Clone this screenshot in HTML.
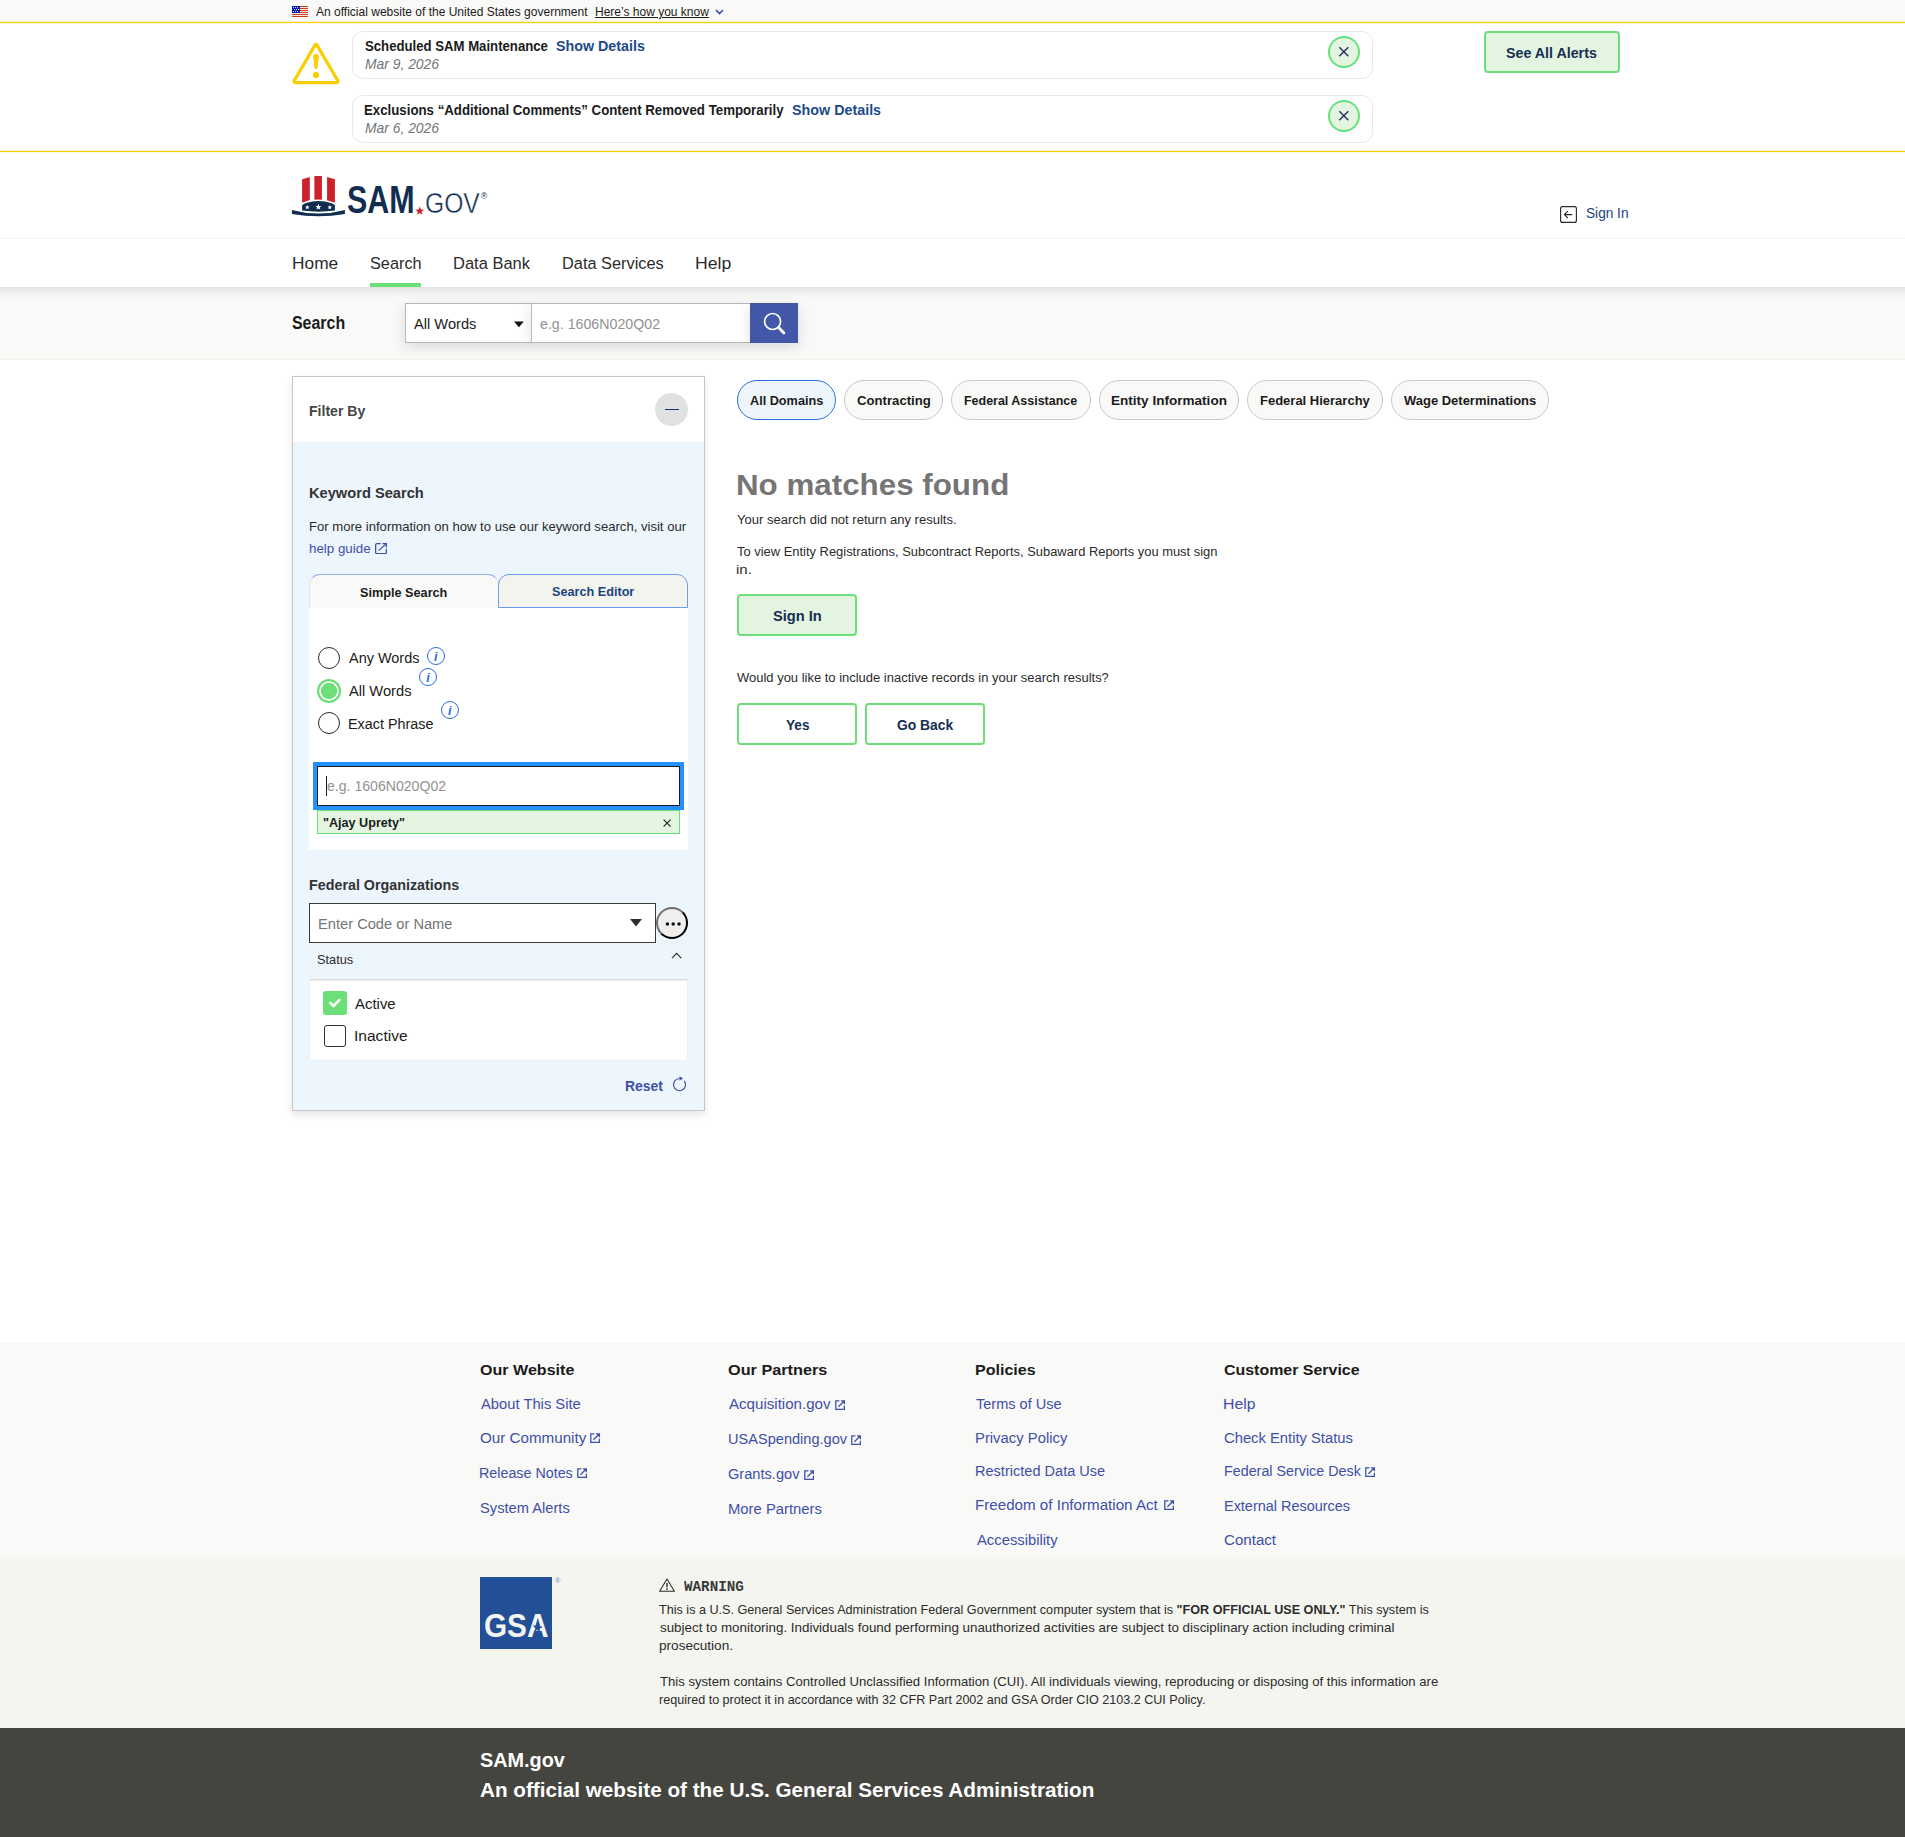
<!DOCTYPE html>
<html lang="en">
<head>
<meta charset="utf-8">
<title>SAM.gov | Search</title>
<style>
html,body{margin:0;padding:0;background:#fff;}
body{font-family:"Liberation Sans",sans-serif;color:#1b1b1b;}
#page{position:relative;width:1905px;height:1837px;overflow:hidden;background:#fff;}
#page div,#page svg{position:absolute;box-sizing:border-box;}
.t{position:absolute;white-space:nowrap;line-height:1;transform-origin:0 0;}
.t b{font-weight:700;}
/* bands */
.govbanner{left:0;top:0;width:1905px;height:22px;background:#f9f9f7;}
.yline{left:0;width:1905px;height:3px;background:linear-gradient(rgba(251,207,8,.18) 0 1px,#fbcf08 1px 2px,rgba(251,207,8,.14) 2px 3px);}
.hline{left:0;top:238px;width:1905px;height:1px;background:#f3f3f0;}
.navshadow{left:0;top:287px;width:1905px;height:12px;background:linear-gradient(#e2e1e0,#eeeeec 40%,#f9f9f7);}
.searchband{left:0;top:287px;width:1905px;height:73px;background:#f9f9f7;border-bottom:1px solid #f1f1ee;}
.navul{left:370px;top:283px;width:51px;height:4px;background:#6ddf79;}
/* alerts */
.acard{left:352px;width:1021px;height:48px;border:1px solid #e8e8e8;border-radius:11px;background:#fff;}
.aclose{left:1328px;width:32px;height:32px;border:2px solid #6ddf79;border-radius:50%;background:#e3f5e1;}
.gbtn{border:2px solid #6ddf79;border-radius:4px;background:#e3f5e1;}
.wbtn{border:2px solid #6ddf79;border-radius:4px;background:#fff;}
/* search controls */
.sbox{top:303px;height:40px;background:#fff;border:1px solid #b9b9b9;box-shadow:0 4px 14px rgba(0,0,0,.13);}
.sbtn{left:750px;top:303px;width:48px;height:40px;background:#4157a8;box-shadow:0 4px 14px rgba(0,0,0,.13);}
/* filter panel */
.panel{left:292px;top:376px;width:413px;height:735px;border:1px solid #c5c5c5;background:#edf5fd;box-shadow:0 4px 8px rgba(0,0,0,.10);}
.phead{left:293px;top:377px;width:411px;height:65px;background:#fff;}
.pcirc{left:655px;top:393px;width:33px;height:33px;border-radius:50%;background:#e1e1e1;}
.tab1{left:309px;top:574px;width:190px;height:34px;border:1px solid rgba(141,180,238,.25);border-top-color:#8db4ee;border-bottom:none;border-radius:11px 11px 0 0;background:#f9f9f7;}
.tab2{left:498px;top:574px;width:190px;height:34px;border:1px solid #6d9df0;border-radius:11px 11px 0 0;background:#f4f4ee;}
.wbox{left:309px;width:379px;background:#fff;}
.radio{left:318px;width:22px;height:22px;border:1.5px solid #2b2b2b;border-radius:50%;background:#fff;}
.radio.on{border:2.1px solid #6ddf79;box-shadow:inset 0 0 0 1.8px #fff;background:#6ddf79;left:317px;width:24px;height:24px;}
.info{width:18.4px;height:18.4px;border:1.4px solid #2a6fdc;border-radius:50%;}
.kwin{left:317px;top:766px;width:363px;height:40px;border:1px solid #1b1b1b;background:#fff;outline:4px solid #2491ff;}
.chip{left:317px;top:810px;width:363px;height:24px;border:1px solid #6ddf79;background:#e3f5e1;}
.fin{left:309px;top:903px;width:347px;height:40px;border:1px solid #3a3a36;background:#fff;}
.dots{left:656px;top:907px;width:32px;height:32px;border:2px solid #000;border-color:#6e6e6e #000 #000 #6e6e6e;border-radius:50%;background:#efefef;}
.cbon{left:323px;top:991px;width:24px;height:24px;border-radius:3px;background:#6ddf79;}
.cboff{left:324px;top:1025px;width:22px;height:22px;border:1.5px solid #303030;border-radius:3px;background:#fff;}
/* pills */
.pill{top:380px;height:40px;border:1px solid #c9c9c9;border-radius:20px;background:#f9f9f7;}
.pill.on{border:1.5px solid #2a6fdc;background:#eff6fb;}
/* footer */
.foot1{left:0;top:1343px;width:1905px;height:214px;background:#f9f9f7;}
.foot2{left:0;top:1557px;width:1905px;height:171px;background:#f4f5ef;}
.foot3{left:0;top:1728px;width:1905px;height:109px;background:#454540;}
.gsa{left:480px;top:1577px;width:72px;height:72px;background:#234f96;}

</style>
</head>
<body>
<div id="page">
<!-- top gov banner -->
<div class="govbanner"></div>
<svg style="left:292px;top:6px;width:16px;height:11px" viewBox="0 0 16 11">
  <rect width="16" height="11" fill="#fff"/>
  <g fill="#d9391a"><rect y="0" width="16" height="1.1"/><rect y="2" width="16" height="1.1"/><rect y="4" width="16" height="1.1"/><rect y="6" width="16" height="1.1"/><rect y="8" width="16" height="1.1"/><rect y="10" width="16" height="1"/></g>
  <rect width="8" height="7" fill="#0a1aa6"/>
  <g fill="#fff"><circle cx="1.5" cy="1.5" r=".55"/><circle cx="3.5" cy="1.5" r=".55"/><circle cx="5.5" cy="1.5" r=".55"/><circle cx="2.5" cy="3.5" r=".55"/><circle cx="4.5" cy="3.5" r=".55"/><circle cx="6.5" cy="3.5" r=".55"/><circle cx="1.5" cy="5.5" r=".55"/><circle cx="3.5" cy="5.5" r=".55"/><circle cx="5.5" cy="5.5" r=".55"/></g>
</svg>
<svg style="left:715px;top:9px;width:9px;height:6px" viewBox="0 0 9 6"><path d="M1 1 L4.5 4.5 L8 1" fill="none" stroke="#3a4fb0" stroke-width="1.7"/></svg>
<div class="yline" style="top:21px"></div>
<div class="yline" style="top:150px"></div>

<!-- alerts -->
<svg style="left:290px;top:40px;width:52px;height:46px" viewBox="290 40 52 46">
  <path d="M314.7 45.6 Q316 43.3 317.3 45.6 L337.6 80.4 Q338.9 82.6 336.3 82.6 L295.7 82.6 Q293.1 82.6 294.4 80.4 Z" fill="none" stroke="#facd04" stroke-width="3.2" stroke-linejoin="round"/>
  <path d="M313.2 56.6 Q313.1 54 316 54 Q318.9 54 318.8 56.6 L317.6 67.6 Q317.4 69.1 316 69.1 Q314.6 69.1 314.4 67.6 Z" fill="#facd04"/>
  <circle cx="316" cy="75" r="3.1" fill="#facd04"/>
</svg>
<div class="acard" style="top:31px"></div>
<div class="acard" style="top:95px"></div>
<div class="aclose" style="top:36px"></div>
<div class="aclose" style="top:100px"></div>
<svg style="left:1338px;top:46px;width:12px;height:12px" viewBox="0 0 12 12"><path d="M1.3 1.3 L10.3 10.3 M10.3 1.3 L1.3 10.3" stroke="#162e51" stroke-width="1.3"/></svg>
<svg style="left:1338px;top:110px;width:12px;height:12px" viewBox="0 0 12 12"><path d="M1.3 1.3 L10.3 10.3 M10.3 1.3 L1.3 10.3" stroke="#162e51" stroke-width="1.3"/></svg>
<div class="gbtn" style="left:1484px;top:31px;width:136px;height:42px"></div>

<!-- header logo -->
<svg style="left:290px;top:174px;width:60px;height:44px" viewBox="290 174 60 44">
  <path d="M302.1 179.2 L309.8 177 L309.8 199.9 L302.1 202.7 Z" fill="#cd2029"/>
  <path d="M314.4 176 L321.9 176 L321.9 199.8 Q318.2 199.3 314.4 199.8 Z" fill="#cd2029"/>
  <path d="M327.1 177 L334.9 179.2 L334.9 202.7 L327.1 200.3 Z" fill="#cd2029"/>
  <path d="M302.1 205.6 Q302.6 204.4 306 203 Q318.5 199.2 331 203 Q334.4 204.4 334.9 205.6 L334.9 210.6 Q318.5 212.8 302.1 210.6 Z" fill="#112e51"/>
  <path d="M291.9 209.9 Q318.4 217.2 344.9 209.9 L344.9 214 Q318.4 218.4 291.9 214 Z" fill="#112e51"/>
  <g fill="#fff">
    <path d="M307.3 205 l.62 1.5 1.62.12-1.24 1.05.4 1.58-1.4-.87-1.4.87.4-1.58-1.24-1.05 1.62-.12z"/>
    <path d="M318.4 204 l.8 1.95 2.1.15-1.6 1.36.5 2.04-1.8-1.12-1.8 1.12.5-2.04-1.6-1.36 2.1-.15z"/>
    <path d="M329.8 205 l.62 1.5 1.62.12-1.24 1.05.4 1.58-1.4-.87-1.4.87.4-1.58-1.24-1.05 1.62-.12z"/>
  </g>
</svg>
<svg style="left:414px;top:205px;width:12px;height:12px" viewBox="414 205 12 12"><path d="M419.75 206.5 l1.1 3.1 3.3.1-2.6 2 .95 3.15-2.75-1.85-2.75 1.85.95-3.15-2.6-2 3.3-.1z" fill="#cd2029"/></svg>

<!-- sign in icon -->
<svg style="left:1559px;top:205px;width:19px;height:19px" viewBox="0 0 19 19">
  <rect x="1.6" y="1.6" width="15.8" height="15.8" rx="2" fill="none" stroke="#2b2b2b" stroke-width="1.15"/>
  <path d="M13.2 9.6 L5.6 9.6 M8.8 6.2 L5.4 9.6 L8.8 13" fill="none" stroke="#2b2b2b" stroke-width="1.1"/>
</svg>

<!-- nav -->
<div class="hline"></div>
<div class="searchband"></div>
<div class="navshadow"></div>
<div class="navul"></div>

<!-- search controls -->
<div class="sbox" style="left:405px;width:127px"></div>
<div class="sbox" style="left:531px;width:220px"></div>
<div class="sbtn"></div>
<svg style="left:514px;top:321px;width:10px;height:7px" viewBox="0 0 10 7"><path d="M0 .4 L9.8 .4 L4.9 6.2 Z" fill="#111"/></svg>
<svg style="left:760px;top:310px;width:28px;height:28px" viewBox="760 310 28 28">
  <circle cx="772.6" cy="321.5" r="8" fill="none" stroke="#fff" stroke-width="1.7"/>
  <path d="M778.6 327.6 L783.9 332.9" stroke="#fff" stroke-width="2.8" stroke-linecap="round"/>
</svg>

<!-- filter panel -->
<div class="panel"></div>
<div class="phead"></div>
<div class="pcirc"></div>
<div style="left:665px;top:409px;width:14px;height:1.3px;background:#12306a"></div>
<svg style="left:375px;top:542.9px;width:12px;height:11.4px" viewBox="0 0 12 11.4"><path d="M5.6 .65 H1.9 Q.65 .65 .65 1.9 V9.5 Q.65 10.75 1.9 10.75 H10.1 Q11.35 10.75 11.35 9.5 V5.8 M7.4 .65 H11.35 V4.4 M11.1 .9 L3.6 7.6" fill="none" stroke="#3f4fa8" stroke-width="1.25"/></svg>
<div class="wbox" style="top:607px;height:243px"></div>
<div class="tab1"></div>
<div class="tab2"></div>
<div class="radio" style="top:647px"></div>
<div class="radio on" style="top:679px"></div>
<div class="radio" style="top:712px"></div>
<div class="info" style="left:427px;top:647px"></div>
<div class="info" style="left:419.1px;top:668.1px"></div>
<div class="info" style="left:441.1px;top:701.1px"></div>
<div class="kwin"></div>
<div style="left:326px;top:776px;width:1px;height:20px;background:#1b1b1b"></div>
<div class="chip"></div>
<svg style="left:662px;top:818px;width:10px;height:10px" viewBox="0 0 10 10"><path d="M1.6 1.6 L8.6 8.6 M8.6 1.6 L1.6 8.6" stroke="#1b1b1b" stroke-width="1.1"/></svg>
<div class="fin"></div>
<svg style="left:629px;top:918px;width:14px;height:10px" viewBox="629 918 14 10"><path d="M630 919 L642 919 L636 926.6 Z" fill="#2e2e2a"/></svg>
<div class="dots"></div>
<svg style="left:665px;top:921px;width:16px;height:6px" viewBox="0 0 16 6"><circle cx="2.45" cy="3.1" r="1.75" fill="#111"/><circle cx="8.2" cy="3.1" r="1.75" fill="#111"/><circle cx="14" cy="3.1" r="1.75" fill="#111"/></svg>
<svg style="left:670px;top:950px;width:14px;height:10px" viewBox="670 950 14 10"><path d="M672 958.1 L676.6 953.3 L681.2 958.1" fill="none" stroke="#333" stroke-width="1.25"/></svg>
<div class="wbox" style="top:979px;height:81px;border:1px solid #efefef;border-top-color:#d9d9d9;border-bottom-color:#f7f9fb;box-shadow:inset 0 1px 2px rgba(0,0,0,.07)"></div>
<div class="cbon"></div>
<svg style="left:326px;top:995px;width:18px;height:16px" viewBox="326 995 18 16"><path d="M329.7 1002.2 L333.5 1006 L340.2 999.1" fill="none" stroke="#fff" stroke-width="2.6"/></svg>
<div class="cboff"></div>
<svg style="left:671px;top:1074px;width:18px;height:19px" viewBox="671 1074 18 19"><path d="M679.5 1078.5 A6.1 6.1 0 1 0 684.3 1080.8" fill="none" stroke="#4150a5" stroke-width="1.15"/><path d="M679.5 1076.3 L683 1078.5 L679.5 1080.7 Z" fill="#4150a5"/></svg>

<!-- pills -->
<div class="pill on" style="left:737px;width:99px"></div>
<div class="pill" style="left:844px;width:99px"></div>
<div class="pill" style="left:951px;width:140px"></div>
<div class="pill" style="left:1099px;width:140px"></div>
<div class="pill" style="left:1247px;width:136px"></div>
<div class="pill" style="left:1391px;width:158px"></div>

<!-- main buttons -->
<div class="gbtn" style="left:737px;top:594px;width:120px;height:42px"></div>
<div class="wbtn" style="left:737px;top:703px;width:120px;height:42px"></div>
<div class="wbtn" style="left:865px;top:703px;width:120px;height:42px"></div>

<!-- footer -->
<div class="foot1"></div>
<div class="foot2"></div>
<div class="foot3"></div>
<div class="gsa"></div>
<svg style="left:658px;top:1577px;width:18px;height:16px" viewBox="0 0 18 16"><path d="M9 1.9 L16.4 14.2 L1.6 14.2 Z" fill="none" stroke="#2b2b2b" stroke-width="1.05" stroke-linejoin="round"/><path d="M9 6 V10.2" stroke="#2b2b2b" stroke-width="1.4"/><circle cx="9" cy="12.1" r=".9" fill="#2b2b2b"/></svg>

<!-- external link icons -->
<svg style="left:590.4px;top:1432.5px;width:10.2px;height:10.2px" viewBox="0 0 10.2 10.2"><path d="M4.4 .8 H.8 V9.4 H9.4 V5.8 M6 .8 H9.4 V4.2 M9.2 1 L3.4 6.8" fill="none" stroke="#3f4fa8" stroke-width="1.3"/></svg>
<svg style="left:577.0px;top:1467.6px;width:10.2px;height:10.2px" viewBox="0 0 10.2 10.2"><path d="M4.4 .8 H.8 V9.4 H9.4 V5.8 M6 .8 H9.4 V4.2 M9.2 1 L3.4 6.8" fill="none" stroke="#3f4fa8" stroke-width="1.3"/></svg>
<svg style="left:834.7px;top:1399.7px;width:10.2px;height:10.2px" viewBox="0 0 10.2 10.2"><path d="M4.4 .8 H.8 V9.4 H9.4 V5.8 M6 .8 H9.4 V4.2 M9.2 1 L3.4 6.8" fill="none" stroke="#3f4fa8" stroke-width="1.3"/></svg>
<svg style="left:850.9px;top:1435.0px;width:10.2px;height:10.2px" viewBox="0 0 10.2 10.2"><path d="M4.4 .8 H.8 V9.4 H9.4 V5.8 M6 .8 H9.4 V4.2 M9.2 1 L3.4 6.8" fill="none" stroke="#3f4fa8" stroke-width="1.3"/></svg>
<svg style="left:803.7px;top:1470.0px;width:10.2px;height:10.2px" viewBox="0 0 10.2 10.2"><path d="M4.4 .8 H.8 V9.4 H9.4 V5.8 M6 .8 H9.4 V4.2 M9.2 1 L3.4 6.8" fill="none" stroke="#3f4fa8" stroke-width="1.3"/></svg>
<svg style="left:1163.5px;top:1500.4px;width:10.2px;height:10.2px" viewBox="0 0 10.2 10.2"><path d="M4.4 .8 H.8 V9.4 H9.4 V5.8 M6 .8 H9.4 V4.2 M9.2 1 L3.4 6.8" fill="none" stroke="#3f4fa8" stroke-width="1.3"/></svg>
<svg style="left:1365.2px;top:1466.6px;width:10.2px;height:10.2px" viewBox="0 0 10.2 10.2"><path d="M4.4 .8 H.8 V9.4 H9.4 V5.8 M6 .8 H9.4 V4.2 M9.2 1 L3.4 6.8" fill="none" stroke="#3f4fa8" stroke-width="1.3"/></svg>
<!-- text -->
<span class="t" id="t0" style="left:316.00px;top:7.20px;font-size:11.9px;transform:scaleX(1.0103);">An official website of the United States government</span>
<span class="t" id="t1" style="left:595.05px;top:7.20px;font-size:11.9px;transform:scaleX(1.0091);text-decoration:underline;text-underline-offset:1px;text-decoration-thickness:1px;">Here’s how you know</span>
<span class="t" id="t2" style="left:365.16px;top:39.10px;font-size:14.6px;font-weight:700;transform:scaleX(0.9022);">Scheduled SAM Maintenance</span>
<span class="t" id="t3" style="left:556.13px;top:39.10px;font-size:14.6px;font-weight:700;color:#1c4a8c;transform:scaleX(0.9785);">Show Details</span>
<span class="t" id="t4" style="left:365.08px;top:56.70px;font-size:14.3px;color:#71767a;font-style:italic;transform:scaleX(0.9694);">Mar 9, 2026</span>
<span class="t" id="t5" style="left:364.15px;top:103.00px;font-size:14.6px;font-weight:700;transform:scaleX(0.9082);">Exclusions “Additional Comments” Content Removed Temporarily</span>
<span class="t" id="t6" style="left:792.13px;top:103.00px;font-size:14.6px;font-weight:700;color:#1c4a8c;transform:scaleX(0.9808);">Show Details</span>
<span class="t" id="t7" style="left:365.08px;top:120.60px;font-size:14.3px;color:#71767a;font-style:italic;transform:scaleX(0.9694);">Mar 6, 2026</span>
<span class="t" id="t8" style="left:1506.34px;top:45.80px;font-size:14.9px;font-weight:700;color:#162e51;transform:scaleX(0.9570);">See All Alerts</span>
<span class="t" id="t9" style="left:347.02px;top:180.80px;font-size:38.2px;font-weight:700;color:#112e51;transform:scaleX(0.7970);">SAM</span>
<span class="t" id="t10" style="left:424.74px;top:188.00px;font-size:30.3px;color:#112e51;transform:scaleX(0.8142);-webkit-text-stroke:.45px #fff;">GOV</span>
<span class="t" id="t11" style="left:480.68px;top:191.60px;font-size:9px;color:#112e51;transform:scaleX(0.9412);">®</span>
<span class="t" id="t12" style="left:1585.71px;top:205.60px;font-size:14.5px;color:#1a4480;transform:scaleX(0.9408);">Sign In</span>
<span class="t" id="t13" style="left:291.65px;top:255.00px;font-size:17.1px;color:#2b2b2b;transform:scaleX(1.0141);">Home</span>
<span class="t" id="t14" style="left:369.69px;top:255.00px;font-size:17.1px;color:#2b2b2b;transform:scaleX(0.9528);">Search</span>
<span class="t" id="t15" style="left:452.71px;top:255.00px;font-size:17.1px;color:#2b2b2b;transform:scaleX(0.9647);">Data Bank</span>
<span class="t" id="t16" style="left:561.72px;top:255.00px;font-size:17.1px;color:#2b2b2b;transform:scaleX(0.9563);">Data Services</span>
<span class="t" id="t17" style="left:694.92px;top:255.00px;font-size:17.1px;color:#2b2b2b;transform:scaleX(1.0320);">Help</span>
<span class="t" id="t18" style="left:292.15px;top:315.20px;font-size:17.6px;font-weight:700;transform:scaleX(0.9049);">Search</span>
<span class="t" id="t19" style="left:414.30px;top:316.80px;font-size:14.8px;transform:scaleX(0.9900);">All Words</span>
<span class="t" id="t20" style="left:539.92px;top:315.90px;font-size:15.2px;color:#929292;transform:scaleX(0.9353);">e.g. 1606N020Q02</span>
<span class="t" id="t21" style="left:309.01px;top:404.80px;font-size:13.9px;font-weight:700;color:#454545;transform:scaleX(1.0129);">Filter By</span>
<span class="t" id="t22" style="left:308.73px;top:485.80px;font-size:14.1px;font-weight:700;color:#333;transform:scaleX(1.0387);">Keyword Search</span>
<span class="t" id="t23" style="left:308.57px;top:520.90px;font-size:12.7px;color:#2b2b2b;transform:scaleX(1.0323);">For more information on how to use our keyword search, visit our</span>
<span class="t" id="t24" style="left:308.68px;top:542.80px;font-size:12.7px;color:#3f4fa8;transform:scaleX(1.0512);">help guide</span>
<span class="t" id="t25" style="left:359.74px;top:585.70px;font-size:13.1px;font-weight:700;transform:scaleX(0.9680);">Simple Search</span>
<span class="t" id="t26" style="left:551.64px;top:584.70px;font-size:13.1px;font-weight:700;color:#1a4480;transform:scaleX(0.9665);">Search Editor</span>
<span class="t" id="t27" style="left:349.00px;top:650.50px;font-size:14.9px;transform:scaleX(0.9712);">Any Words</span>
<span class="t" id="t28" style="left:349.00px;top:683.70px;font-size:14.9px;transform:scaleX(0.9847);">All Words</span>
<span class="t" id="t29" style="left:348.35px;top:716.70px;font-size:14.9px;transform:scaleX(0.9647);">Exact Phrase</span>
<span class="t" id="t30" style="left:434.11px;top:651.20px;font-size:12.6px;font-weight:700;color:#2a6fdc;font-style:italic;">i</span>
<span class="t" id="t31" style="left:426.21px;top:672.30px;font-size:12.6px;font-weight:700;color:#2a6fdc;font-style:italic;">i</span>
<span class="t" id="t32" style="left:448.11px;top:705.40px;font-size:12.6px;font-weight:700;color:#2a6fdc;font-style:italic;">i</span>
<span class="t" id="t33" style="left:326.81px;top:778.40px;font-size:15.0px;color:#929292;transform:scaleX(0.9392);">e.g. 1606N020Q02</span>
<span class="t" id="t34" style="left:322.92px;top:816.10px;font-size:13.2px;font-weight:700;transform:scaleX(0.9556);">"Ajay Uprety"</span>
<span class="t" id="t35" style="left:308.75px;top:877.80px;font-size:14.1px;font-weight:700;color:#333;transform:scaleX(1.0149);">Federal Organizations</span>
<span class="t" id="t36" style="left:317.51px;top:916.80px;font-size:14.7px;color:#757575;transform:scaleX(0.9985);">Enter Code or Name</span>
<span class="t" id="t37" style="left:317.16px;top:954.70px;font-size:11.9px;color:#2b2b2b;transform:scaleX(1.0747);">Status</span>
<span class="t" id="t38" style="left:355.20px;top:996.70px;font-size:14.9px;transform:scaleX(1.0022);">Active</span>
<span class="t" id="t39" style="left:354.26px;top:1029.20px;font-size:14.9px;transform:scaleX(1.0444);">Inactive</span>
<span class="t" id="t40" style="left:624.83px;top:1079.20px;font-size:14.9px;font-weight:700;color:#3f4fa8;transform:scaleX(0.9318);">Reset</span>
<span class="t" id="t41" style="left:750.20px;top:394.00px;font-size:13.2px;font-weight:700;transform:scaleX(0.9611);">All Domains</span>
<span class="t" id="t42" style="left:857.20px;top:394.00px;font-size:13.2px;font-weight:700;transform:scaleX(0.9975);">Contracting</span>
<span class="t" id="t43" style="left:964.17px;top:394.00px;font-size:13.2px;font-weight:700;transform:scaleX(0.9450);">Federal Assistance</span>
<span class="t" id="t44" style="left:1110.80px;top:394.00px;font-size:13.2px;font-weight:700;transform:scaleX(1.0276);">Entity Information</span>
<span class="t" id="t45" style="left:1259.64px;top:394.00px;font-size:13.2px;font-weight:700;transform:scaleX(0.9854);">Federal Hierarchy</span>
<span class="t" id="t46" style="left:1403.70px;top:394.00px;font-size:13.2px;font-weight:700;transform:scaleX(0.9841);">Wage Determinations</span>
<span class="t" id="t47" style="left:736.24px;top:469.50px;font-size:30px;font-weight:700;color:#757575;transform:scaleX(1.0443);">No matches found</span>
<span class="t" id="t48" style="left:737.04px;top:513.90px;font-size:12.3px;color:#2b2b2b;transform:scaleX(1.0590);">Your search did not return any results.</span>
<span class="t" id="t49" style="left:737.04px;top:545.70px;font-size:12.3px;color:#2b2b2b;transform:scaleX(1.0508);">To view Entity Registrations, Subcontract Reports, Subaward Reports you must sign</span>
<span class="t" id="t50" style="left:736.31px;top:563.80px;font-size:12.3px;color:#2b2b2b;transform:scaleX(1.2192);">in.</span>
<span class="t" id="t51" style="left:773.33px;top:608.70px;font-size:14.9px;font-weight:700;color:#162e51;transform:scaleX(0.9820);">Sign In</span>
<span class="t" id="t52" style="left:737.30px;top:671.60px;font-size:12.3px;color:#2b2b2b;transform:scaleX(1.0550);">Would you like to include inactive records in your search results?</span>
<span class="t" id="t53" style="left:785.77px;top:717.50px;font-size:14.9px;font-weight:700;color:#162e51;transform:scaleX(0.9139);">Yes</span>
<span class="t" id="t54" style="left:896.98px;top:717.50px;font-size:14.9px;font-weight:700;color:#162e51;transform:scaleX(0.9297);">Go Back</span>
<span class="t" id="t55" style="left:479.85px;top:1361.50px;font-size:15.4px;font-weight:700;transform:scaleX(1.0438);">Our Website</span>
<span class="t" id="t56" style="left:728.04px;top:1361.50px;font-size:15.4px;font-weight:700;transform:scaleX(1.0550);">Our Partners</span>
<span class="t" id="t57" style="left:975.46px;top:1361.50px;font-size:15.4px;font-weight:700;transform:scaleX(1.0428);">Policies</span>
<span class="t" id="t58" style="left:1224.05px;top:1361.50px;font-size:15.4px;font-weight:700;transform:scaleX(1.0360);">Customer Service</span>
<span class="t" id="t59" style="left:480.50px;top:1396.70px;font-size:14.7px;color:#3f4fa8;transform:scaleX(1.0044);">About This Site</span>
<span class="t" id="t60" style="left:479.79px;top:1431.00px;font-size:14.7px;color:#3f4fa8;transform:scaleX(1.0337);">Our Community</span>
<span class="t" id="t61" style="left:479.34px;top:1466.00px;font-size:14.7px;color:#3f4fa8;transform:scaleX(0.9731);">Release Notes</span>
<span class="t" id="t62" style="left:479.88px;top:1501.00px;font-size:14.7px;color:#3f4fa8;transform:scaleX(0.9993);">System Alerts</span>
<span class="t" id="t63" style="left:728.70px;top:1396.70px;font-size:14.7px;color:#3f4fa8;transform:scaleX(1.0270);">Acquisition.gov</span>
<span class="t" id="t64" style="left:727.58px;top:1432.00px;font-size:14.7px;color:#3f4fa8;transform:scaleX(0.9919);">USASpending.gov</span>
<span class="t" id="t65" style="left:728.02px;top:1467.00px;font-size:14.7px;color:#3f4fa8;transform:scaleX(0.9948);">Grants.gov</span>
<span class="t" id="t66" style="left:727.50px;top:1501.70px;font-size:14.7px;color:#3f4fa8;transform:scaleX(1.0091);">More Partners</span>
<span class="t" id="t67" style="left:976.19px;top:1396.70px;font-size:14.7px;color:#3f4fa8;transform:scaleX(0.9888);">Terms of Use</span>
<span class="t" id="t68" style="left:975.30px;top:1431.00px;font-size:14.7px;color:#3f4fa8;transform:scaleX(1.0097);">Privacy Policy</span>
<span class="t" id="t69" style="left:975.32px;top:1463.70px;font-size:14.7px;color:#3f4fa8;transform:scaleX(0.9906);">Restricted Data Use</span>
<span class="t" id="t70" style="left:975.27px;top:1498.00px;font-size:14.7px;color:#3f4fa8;transform:scaleX(1.0321);">Freedom of Information Act</span>
<span class="t" id="t71" style="left:976.50px;top:1532.50px;font-size:14.7px;color:#3f4fa8;transform:scaleX(1.0078);">Accessibility</span>
<span class="t" id="t72" style="left:1223.43px;top:1396.70px;font-size:14.7px;color:#3f4fa8;transform:scaleX(1.0728);">Help</span>
<span class="t" id="t73" style="left:1224.01px;top:1431.00px;font-size:14.7px;color:#3f4fa8;transform:scaleX(1.0055);">Check Entity Status</span>
<span class="t" id="t74" style="left:1223.54px;top:1463.70px;font-size:14.7px;color:#3f4fa8;transform:scaleX(0.9745);">Federal Service Desk</span>
<span class="t" id="t75" style="left:1223.53px;top:1498.50px;font-size:14.7px;color:#3f4fa8;transform:scaleX(0.9834);">External Resources</span>
<span class="t" id="t76" style="left:1223.99px;top:1532.50px;font-size:14.7px;color:#3f4fa8;transform:scaleX(1.0283);">Contact</span>
<span class="t" id="t77" style="left:483.97px;top:1608.90px;font-size:33.3px;font-weight:700;color:#f4f4f0;transform:scaleX(0.8924);">GSA</span>
<span class="t" id="t78" style="left:554.64px;top:1576.60px;font-size:7.5px;color:#6f8fc4;transform:scaleX(0.9674);">®</span>
<span class="t" id="t79" style="left:683.70px;top:1580.00px;font-size:14.2px;font-weight:700;color:#3a3a3a;font-family:'Liberation Mono', monospace;transform:scaleX(1.0051);">WARNING</span>
<span class="t" id="t80" style="left:659.37px;top:1603.80px;font-size:12.4px;color:#2b2b2b;transform:scaleX(1.0184);">This is a U.S. General Services Administration Federal Government computer system that is <b>"FOR OFFICIAL USE ONLY."</b> This system is</span>
<span class="t" id="t81" style="left:659.66px;top:1621.70px;font-size:12.4px;color:#2b2b2b;transform:scaleX(1.0793);">subject to monitoring. Individuals found performing unauthorized activities are subject to disciplinary action including criminal</span>
<span class="t" id="t82" style="left:659.18px;top:1639.50px;font-size:12.4px;color:#2b2b2b;transform:scaleX(1.0964);">prosecution.</span>
<span class="t" id="t83" style="left:659.74px;top:1675.70px;font-size:12.4px;color:#2b2b2b;transform:scaleX(1.0581);">This system contains Controlled Unclassified Information (CUI). All individuals viewing, reproducing or disposing of this information are</span>
<span class="t" id="t84" style="left:659.18px;top:1693.70px;font-size:12.4px;color:#2b2b2b;transform:scaleX(1.0150);">required to protect it in accordance with 32 CFR Part 2002 and GSA Order CIO 2103.2 CUI Policy.</span>
<span class="t" id="t85" style="left:480.19px;top:1749.50px;font-size:20px;font-weight:700;color:#fff;transform:scaleX(0.9921);">SAM.gov</span>
<span class="t" id="t86" style="left:480.18px;top:1779.80px;font-size:20.1px;font-weight:700;color:#fff;transform:scaleX(1.0297);">An official website of the U.S. General Services Administration</span>
<!-- overlays -->
<svg style="left:526px;top:1616px;width:22px;height:22px" viewBox="526 1616 22 22"><path d="M538.35 1622.45 L539.13 1626.22 L542.92 1626.86 L539.58 1628.76 L540.14 1632.57 L537.29 1629.98 L533.85 1631.68 L535.43 1628.18 L532.75 1625.43 L536.57 1625.86 Z" fill="#234f96"/></svg>
</div>
</body>
</html>
